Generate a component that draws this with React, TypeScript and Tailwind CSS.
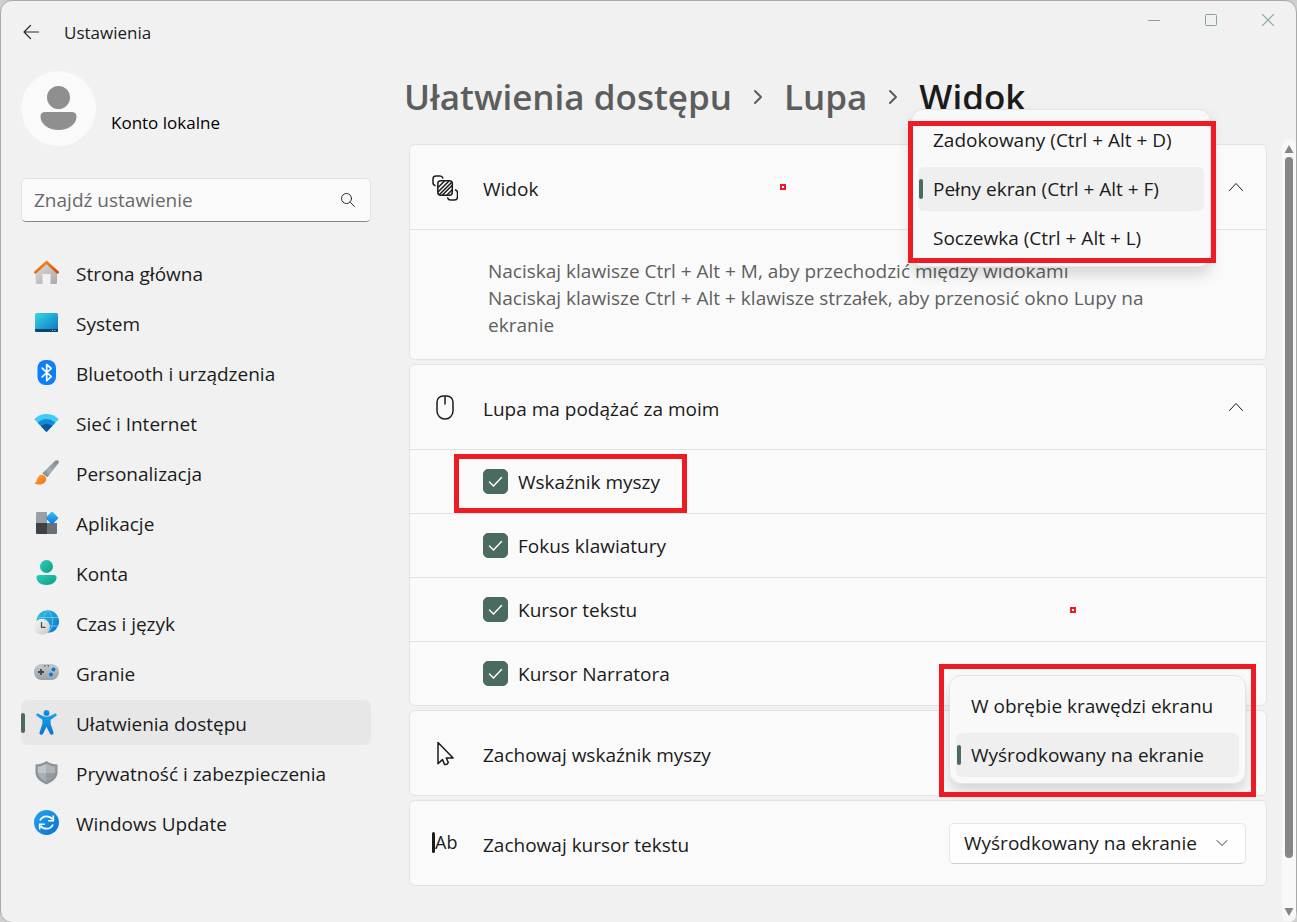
import { useState, type ReactNode } from 'react';

function HomeIcon() {
  return (
    <svg viewBox="0 0 25 25" className="size-[25px]">
      <defs>
        <linearGradient id="home-wall" x1="0" y1="0" x2="1" y2="1">
          <stop offset="0" stopColor="#dcdcdc" />
          <stop offset="1" stopColor="#a9a9a9" />
        </linearGradient>
        <linearGradient id="home-roof" x1="0" y1="0" x2="1" y2="1">
          <stop offset="0" stopColor="#f8931f" />
          <stop offset="1" stopColor="#d2480f" />
        </linearGradient>
      </defs>
      <path d="M12.500 4 23 13v9.500a1.500 1.500 0 0 1-1.500 1.500H16.500V14H8.500v10H3.200A1.500 1.500 0 0 1 1.700 22.500V13z" fill="url(#home-wall)" />
      <path d="M1.500 12.300 12.500 2.300l11 10" fill="none" stroke="url(#home-roof)" strokeWidth="2.800" strokeLinejoin="round" strokeLinecap="round" />
    </svg>
  );
}

function SystemIcon() {
  return (
    <svg viewBox="0 0 25 25" className="size-[25px]">
      <defs>
        <linearGradient id="sys" x1="0" y1="0" x2="1" y2="1">
          <stop offset="0" stopColor="#37d8e4" />
          <stop offset="1" stopColor="#0b72c4" />
        </linearGradient>
      </defs>
      <rect x="1" y="3" width="23" height="19" rx="1.500" fill="url(#sys)" />
      <path d="M1 19h23v1.500a1.500 1.500 0 0 1-1.500 1.500h-20A1.500 1.500 0 0 1 1 20.500z" fill="#0b4667" />
      <path d="M18 20.500h1M20.500 20.500h1" stroke="#9fd3ea" strokeWidth="1" />
    </svg>
  );
}

function BluetoothIcon() {
  return (
    <svg viewBox="0 0 25 25" className="size-[25px]">
      <rect x="3.500" y="0" width="18.500" height="25" rx="8" fill="#0f7efb" />
      <path d="m8.200 8.200 9 8.400-4.500 4V4.500l4.500 4-9 8.300" fill="none" stroke="#fff" strokeWidth="1.700" strokeLinejoin="round" strokeLinecap="round" />
    </svg>
  );
}

function WifiIcon() {
  return (
    <svg viewBox="0 0 25 25" className="size-[25px]">
      <path d="M.300 9.300C3.500 5.800 7.800 4 12.500 4s9 1.800 12.200 5.300L12.500 22z" fill="#3fccf6" />
      <path d="M3.700 12.800C6.200 10.300 9.200 9 12.500 9s6.300 1.300 8.800 3.800L12.500 22z" fill="#1689d6" />
      <path d="M7 16.300c1.600-1.600 3.500-2.500 5.500-2.500s3.900.9 5.500 2.500L12.500 22z" fill="#0f559c" />
    </svg>
  );
}

function BrushIcon() {
  return (
    <svg viewBox="0 0 25 25" className="size-[25px]">
      <defs>
        <linearGradient id="brush-handle" x1="1" y1="0" x2="0" y2="1">
          <stop offset="0" stopColor="#7c858b" />
          <stop offset=".6" stopColor="#a6afb5" />
          <stop offset="1" stopColor="#6b747a" />
        </linearGradient>
        <linearGradient id="brush-tip" x1="0" y1="0" x2="1" y2="1">
          <stop offset="0" stopColor="#fbae3c" />
          <stop offset="1" stopColor="#ee6d12" />
        </linearGradient>
      </defs>
      <path d="M23.900.600c1 .7 1.100 1.700.5 2.700L13.400 17.300 8.300 13.200 20.800 1.100c.9-.8 2.200-1.100 3.100-.5z" fill="url(#brush-handle)" />
      <path d="M4.200 16.800c1.700-2.400 4.700-2.600 6.600-.9 1.900 1.700 1.800 4.700-.2 6.700-2.500 2.500-7 2.500-10.300.9 2.600-1.200 2.200-4.300 3.900-6.700z" fill="url(#brush-tip)" />
    </svg>
  );
}

function AppsIcon() {
  return (
    <svg viewBox="0 0 25 25" className="size-[25px]">
      <defs>
        <linearGradient id="apps-tile" x1="0" y1="0" x2="1" y2="1">
          <stop offset="0" stopColor="#35c3fa" />
          <stop offset="1" stopColor="#0d73dc" />
        </linearGradient>
      </defs>
      <path d="M3 2h10v11H2V3a1 1 0 0 1 1-1z" fill="#98a0a5" />
      <path d="M2 13h11v11H3a1 1 0 0 1-1-1z" fill="#3e4246" />
      <path d="M13 13h10v10a1 1 0 0 1-1 1h-9z" fill="#697076" />
      <rect x="13.300" y="3.300" width="9.400" height="9.400" rx="1" transform="rotate(45 18 8)" fill="url(#apps-tile)" />
    </svg>
  );
}

function AccountIcon() {
  return (
    <svg viewBox="0 0 25 25" className="size-[25px]">
      <defs>
        <linearGradient id="account" x1="0" y1="0" x2="1" y2="1">
          <stop offset="0" stopColor="#2bd0b8" />
          <stop offset="1" stopColor="#0f9a83" />
        </linearGradient>
      </defs>
      <circle cx="12.500" cy="6.500" r="6.500" fill="url(#account)" />
      <path d="M5 15h15c1.500 0 2.500 1 2.500 2.500 0 4.500-4.300 7.500-10 7.500s-10-3-10-7.500C2.500 16 3.500 15 5 15z" fill="url(#account)" />
    </svg>
  );
}

function TimeIcon() {
  return (
    <svg viewBox="0 0 25 25" className="size-[25px]">
      <defs>
        <linearGradient id="globe" x1="0" y1="0" x2="1" y2="1">
          <stop offset="0" stopColor="#35bfe2" />
          <stop offset="1" stopColor="#0e6fcb" />
        </linearGradient>
        <linearGradient id="clock" x1="0" y1="0" x2="1" y2="1">
          <stop offset="0" stopColor="#fafafa" />
          <stop offset="1" stopColor="#c4c6c9" />
        </linearGradient>
      </defs>
      <circle cx="13.800" cy="11.500" r="11.300" fill="url(#globe)" />
      <path d="M4 7.500h20M4 16h20M13.800.200c-6.500 6-6.500 16.500 0 22.600M13.800.200c6.500 6 6.500 16.500 0 22.600" fill="none" stroke="#4fd0ee" strokeWidth="1" />
      <circle cx="8" cy="16.800" r="8" fill="url(#clock)" />
      <path d="M7.500 12v5.300h4" fill="none" stroke="#4b4f54" strokeWidth="1.300" />
    </svg>
  );
}

function GamepadIcon() {
  return (
    <svg viewBox="0 0 25 25" className="size-[25px]">
      <defs>
        <linearGradient id="pad" x1="0" y1="0" x2="0" y2="1">
          <stop offset="0" stopColor="#c5cacd" />
          <stop offset="1" stopColor="#9ba3a8" />
        </linearGradient>
      </defs>
      <rect x="0" y="4" width="25" height="16" rx="7.500" fill="url(#pad)" />
      <path d="M7 9v6M4 12h6" stroke="#43484c" strokeWidth="1.800" />
      <path d="M10 5.800h1.500M13.500 5.800H15" stroke="#50565a" strokeWidth="1.200" />
      <circle cx="19.500" cy="9.500" r="2" fill="#0f77d3" />
      <circle cx="17" cy="14.500" r="2" fill="#0f77d3" />
    </svg>
  );
}

function AccessibilityIcon() {
  return (
    <svg viewBox="0 0 25 25" className="size-[25px]">
      <defs>
        <linearGradient id="person" x1="0" y1="0" x2="0" y2="1">
          <stop offset="0" stopColor="#18a1e8" />
          <stop offset="1" stopColor="#0a74d2" />
        </linearGradient>
      </defs>
      <circle cx="12.500" cy="2.900" r="2.900" fill="url(#person)" />
      <path d="M3.900 3.600c1.400.6 4.800 3.200 8.600 3.200s7.200-2.600 8.600-3.200c1.300-.4 2.300 1.500 1 2.500l-5.500 3.600v4.100l2.900 8.600c.6 2-2.500 3.500-3.500 1.400l-3.500-7-3.500 7c-1 2.100-4.100.6-3.500-1.400l2.900-8.600V9.700L2.900 6.100c-1.300-1-.3-2.900 1-2.500z" fill="url(#person)" />
    </svg>
  );
}

function ShieldIcon() {
  return (
    <svg viewBox="0 0 25 25" className="size-[25px]">
      <path d="M12.500 1c3 2.300 6.500 3.400 11 3.500V12c0 5.800-4 9.500-11 12.500C5.500 21.500 1.500 17.800 1.500 12V4.500C6 4.400 9.500 3.300 12.500 1z" fill="#8b9398" />
      <path d="M12.500 3.500c-2.500 1.700-5.300 2.700-8.700 3V12c0 .3 0 .7.100 1h8.600z" fill="#c1c5c8" />
      <path d="M12.500 3.500c2.500 1.700 5.300 2.700 8.700 3V12c0 .3 0 .7-.1 1h-8.600z" fill="#aeb4b8" />
      <path d="M3.900 13c.5 3.700 3.400 6.500 8.600 8.900V13z" fill="#a9afb3" />
      <path d="M21.100 13c-.5 3.700-3.400 6.500-8.600 8.900V13z" fill="#959ca1" />
    </svg>
  );
}

function UpdateIcon() {
  return (
    <svg viewBox="0 0 25 25" className="size-[25px]">
      <defs>
        <linearGradient id="update" x1="0" y1="0" x2="1" y2="1">
          <stop offset="0" stopColor="#22a6ea" />
          <stop offset="1" stopColor="#0b6fd3" />
        </linearGradient>
      </defs>
      <circle cx="12.500" cy="12.500" r="12.500" fill="url(#update)" />
      <path d="M6 10.500c1.200-2.700 3.600-4.200 6.500-4.200 2.500 0 4.600 1 6 3M19 14.500c-1.200 2.700-3.600 4.200-6.500 4.200-2.500 0-4.600-1-6-3" fill="none" stroke="#fff" strokeWidth="1.800" />
      <path d="M19.300 5.500v5.200h-5.200M5.700 19.500v-5.200h5.200" fill="none" stroke="#fff" strokeWidth="1.600" />
    </svg>
  );
}

function ViewIcon() {
  return (
    <svg viewBox="0 0 26 26" className="size-[26px]" fill="none" stroke="#1b1b1b" strokeWidth="1.500" strokeLinecap="round">
      <path d="M3 10.500C1.600 10.200 1 9.200 1 7.800V4c0-2 1-3 3-3h4c1.400 0 2.400.6 2.800 2M23.500 15c1.200.4 2 1.400 2 2.800V22c0 2-1 3-3 3h-4c-1.400 0-2.400-.6-2.800-2" />
      <rect x="5.800" y="5.800" width="14.500" height="14.500" rx="3" />
      <path d="M6.500 12l5.500-5.500M6.500 16.500l10-10M7.500 19.500 19.500 7.500M10.500 20l9.500-9.500M15 20l5-5" />
    </svg>
  );
}

function MouseIcon() {
  return (
    <svg viewBox="0 0 26 26" className="size-[26px]" fill="none" stroke="#1b1b1b" strokeWidth="1.500" strokeLinecap="round">
      <path d="M5 7a6 6 0 0 1 6-6h4a6 6 0 0 1 6 6v9a8 8 0 0 1-16 0zM13 1v8" />
    </svg>
  );
}

function PointerIcon() {
  return (
    <svg viewBox="0 0 26 26" className="size-[26px]" fill="none" stroke="#1b1b1b" strokeWidth="1.500" strokeLinejoin="round">
      <path d="M6 1.500v21.300l4.400-4.200 2.300 5 2.200-.4 1.400-1.700-2-4.500h6.800z" />
    </svg>
  );
}

function CursorIcon() {
  return (
    <span aria-hidden="true" className="flex items-center pb-1">
      <span className="h-[21px] w-[3px] rounded-sm bg-[#1b1b1b]" />
      <span className="text-[18px] leading-none">Ab</span>
    </span>
  );
}

function Chevron({ d, className }: { d: string; className: string }) {
  return (
    <svg viewBox="0 0 16 16" className={className} fill="none" stroke="currentColor" strokeLinecap="round" strokeLinejoin="round">
      <path d={d} />
    </svg>
  );
}

const navItems = [
  { label: 'Strona główna', icon: <HomeIcon /> },
  { label: 'System', icon: <SystemIcon /> },
  { label: 'Bluetooth i urządzenia', icon: <BluetoothIcon /> },
  { label: 'Sieć i Internet', icon: <WifiIcon /> },
  { label: 'Personalizacja', icon: <BrushIcon /> },
  { label: 'Aplikacje', icon: <AppsIcon /> },
  { label: 'Konta', icon: <AccountIcon /> },
  { label: 'Czas i język', icon: <TimeIcon /> },
  { label: 'Granie', icon: <GamepadIcon /> },
  { label: 'Ułatwienia dostępu', icon: <AccessibilityIcon />, active: true },
  { label: 'Prywatność i zabezpieczenia', icon: <ShieldIcon /> },
  { label: 'Windows Update', icon: <UpdateIcon /> },
];

const followItems = ['Wskaźnik myszy', 'Fokus klawiatury', 'Kursor tekstu', 'Kursor Narratora'];

function Card({ children }: { children: ReactNode }) {
  return <section className="rounded-md border border-[#e3e3e3] bg-[#fafafa]">{children}</section>;
}

function CardRow({ icon, title, children }: { icon: ReactNode; title: string; children?: ReactNode }) {
  return (
    <div className="flex h-[84px] items-center pl-[22px]">
      <div className="flex w-[51px] shrink-0 items-center pt-[2px]">{icon}</div>
      <h2 className="mt-1 flex-1">{title}</h2>
      {children}
    </div>
  );
}

function Menu({ label, options, selected, onSelect }: { label: string; options: string[]; selected: number; onSelect: (i: number) => void }) {
  return (
    <div
      role="listbox"
      aria-label={label}
      className="flex flex-col gap-[5px] rounded-xl border border-[#e4e4e4] bg-[#f9f9f9] px-[6px] pt-2 pb-[6px] shadow-[0_8px_14px_rgba(0,0,0,0.14)]"
    >
      {options.map((option, i) => (
        <button
          key={option}
          type="button"
          role="option"
          aria-selected={i === selected}
          onClick={() => onSelect(i)}
          className={`flex h-11 items-center rounded-md text-left whitespace-nowrap ${i === selected ? 'bg-[#efefef]' : ''}`}
        >
          <span className={`ml-px h-5 w-1 rounded-full ${i === selected ? 'bg-[#496b60]' : ''}`} />
          <span className="ml-[10px]">{option}</span>
        </button>
      ))}
    </div>
  );
}

export default function App() {
  const [view, setView] = useState(1);
  const [pointer, setPointer] = useState(1);

  return (
    <div className="flex min-h-screen bg-[#cfcfcf] font-['Open_Sans','Noto_Sans',sans-serif] text-[19px] leading-[27px] text-[#1b1b1b]">
      <div className="flex min-w-0 flex-1 flex-col rounded-xl border border-[#a9a9a9] bg-[#f1f1f1]">
        <header className="flex h-[70px] items-start justify-between">
          <div className="flex h-[62px] items-center pl-[21px]">
            <button type="button" aria-label="Wstecz" className="mr-[24px]">
              <svg viewBox="0 0 18 18" className="size-[18px]" fill="none" stroke="#2b2b2b" strokeWidth="1.200" strokeLinecap="round" strokeLinejoin="round">
                <path d="M16.500 9H2M8.500 2.500 2 9l6.500 6.500" />
              </svg>
            </button>
            <span className="text-[17px]">Ustawienia</span>
          </div>
          <div className="flex text-[#86a39b]">
            <button type="button" aria-label="Minimalizuj" className="flex h-[38px] w-[57px] items-center justify-center">
              <svg viewBox="0 0 12 12" className="size-3" fill="none" stroke="currentColor"><path d="M0 6.500h12" /></svg>
            </button>
            <button type="button" aria-label="Maksymalizuj" className="flex h-[38px] w-[57px] items-center justify-center">
              <svg viewBox="0 0 12 12" className="size-3" fill="none" stroke="currentColor"><rect x=".5" y=".5" width="11" height="11" rx="1" /></svg>
            </button>
            <button type="button" aria-label="Zamknij" className="flex h-[38px] w-[57px] items-center justify-center">
              <svg viewBox="0 0 12 12" className="size-3" fill="none" stroke="currentColor" strokeWidth="1.200"><path d="M0 0l12 12M12 0 0 12" /></svg>
            </button>
          </div>
        </header>

        <div className="flex flex-1">
          <aside className="ml-5 w-[350px] shrink-0">
            <div className="flex h-[75px] items-end">
              <svg viewBox="0 0 75 75" className="size-[75px]">
                <circle cx="37.500" cy="37.500" r="37.500" fill="#fafafa" />
                <circle cx="37.500" cy="26.500" r="11.500" fill="#8f8f8f" />
                <path d="M24 41h27c2.800 0 4.500 1.500 4.500 4.500C55.500 53 48 59 37.500 59s-18-6-18-13.500c0-3 1.700-4.500 4.500-4.500z" fill="#8f8f8f" />
              </svg>
              <span className="mb-[10px] ml-[15px] text-[17px] text-black">Konto lokalne</span>
            </div>

            <div className="mt-8 flex h-11 items-center rounded-[5px] border border-b-[#868686] border-[#e3e3e3] bg-[#fafafa] px-3">
              <input
                type="search"
                aria-label="Znajdź ustawienie"
                placeholder="Znajdź ustawienie"
                className="min-w-0 flex-1 bg-transparent outline-none placeholder:text-[#686868]"
              />
              <svg viewBox="0 0 16 16" className="mr-[2px] size-4" fill="none" stroke="#2b2b2b" strokeLinecap="round">
                <circle cx="6.500" cy="6.500" r="5" />
                <path d="m10.500 10.500 4 4" />
              </svg>
            </div>

            <nav className="mt-7 flex flex-col gap-[5px]">
              {navItems.map((item) => (
                <a
                  key={item.label}
                  href="#"
                  className={`flex h-[45px] items-center rounded-md ${item.active ? 'bg-[#e7e7e7]' : ''}`}
                >
                  <span className={`h-5 w-1 rounded-full ${item.active ? 'bg-[#496b60]' : ''}`} />
                  <span className="ml-[9px]">{item.icon}</span>
                  <span className="mt-1 ml-[17px]">{item.label}</span>
                </a>
              ))}
            </nav>
          </aside>

          <main className="ml-[33px] flex min-w-0 flex-1 flex-col">
            <h1 className="flex h-[52px] items-center text-[35px] leading-[50px] font-semibold whitespace-nowrap">
              <a href="#" className="text-[#5d5d5d]">Ułatwienia dostępu</a>
              <Chevron d="m5 2 6 6-6 6" className="mx-[18px] size-4 stroke-2 text-[#5d5d5d]" />
              <a href="#" className="text-[#5d5d5d]">Lupa</a>
              <Chevron d="m5 2 6 6-6 6" className="mx-[18px] size-4 stroke-2 text-[#5d5d5d]" />
              <span>Widok</span>
            </h1>

            <div className="mt-4 flex flex-1">
              <div className="mt-[5px] mb-9 ml-[5px] flex min-w-0 flex-1 flex-col gap-1">
                <Card>
                  <CardRow icon={<ViewIcon />} title="Widok">
                    <span className="mr-[122px] size-[6px] border-2 border-[#ed1c24]" />
                    <div className="relative h-[84px] w-[308px]">
                      <div className="absolute -top-9 left-[3px] w-[300px]">
                        <Menu
                          label="Widok"
                          options={['Zadokowany (Ctrl + Alt + D)', 'Pełny ekran (Ctrl + Alt + F)', 'Soczewka (Ctrl + Alt + L)']}
                          selected={view}
                          onSelect={setView}
                        />
                      </div>
                      <div className="pointer-events-none absolute -top-6 left-0 h-[142px] w-[308px] border-5 border-[#ed1c24]" />
                    </div>
                    <button type="button" aria-label="Zwiń: Widok" className="mr-[22px] ml-3">
                      <Chevron d="m1.500 11.500 6.500-7 6.500 7" className="size-4" />
                    </button>
                  </CardRow>
                  <div className="border-t border-[#e3e3e3] pt-7 pr-[100px] pb-5 pl-[78px] text-[#5f5f5f]">
                    <p>Naciskaj klawisze Ctrl + Alt + M, aby przechodzić między widokami</p>
                    <p>Naciskaj klawisze Ctrl + Alt + klawisze strzałek, aby przenosić okno Lupy na ekranie</p>
                  </div>
                </Card>

                <Card>
                  <CardRow icon={<MouseIcon />} title="Lupa ma podążać za moim">
                    <button type="button" aria-label="Zwiń: Lupa ma podążać za moim" className="mr-[22px]">
                      <Chevron d="m1.500 11.500 6.500-7 6.500 7" className="size-4" />
                    </button>
                  </CardRow>
                  {followItems.map((item, i) => (
                    <div key={item} className="relative flex h-16 items-center justify-between border-t border-[#e3e3e3] pr-[190px] pl-[73px]">
                      <label className="flex items-center gap-[10px]">
                        <span className="relative flex">
                          <input type="checkbox" defaultChecked className="peer size-[25px] appearance-none rounded-[5px] border border-[#8a8a8a] checked:border-[#496b60] checked:bg-[#496b60]" />
                          <svg viewBox="0 0 25 25" className="pointer-events-none absolute inset-0 hidden size-[25px] peer-checked:block" fill="none" stroke="#fff" strokeWidth="1.400" strokeLinecap="round" strokeLinejoin="round">
                            <path d="m6.500 13 4 4 8-8.500" />
                          </svg>
                        </span>
                        <span className="mt-px">{item}</span>
                      </label>
                      {i === 0 && (
                        <span className="pointer-events-none absolute top-1 left-11 h-[59px] w-[233px] border-5 border-[#ed1c24]" />
                      )}
                      {i === 2 && <span className="size-[6px] border-2 border-[#ed1c24]" />}
                    </div>
                  ))}
                </Card>

                <Card>
                  <CardRow icon={<PointerIcon />} title="Zachowaj wskaźnik myszy">
                    <div className="relative mr-[10px] h-[84px] w-[317px]">
                      <div className="absolute -top-9 left-[10px] w-[297px]">
                        <Menu
                          label="Zachowaj wskaźnik myszy"
                          options={['W obrębie krawędzi ekranu', 'Wyśrodkowany na ekranie']}
                          selected={pointer}
                          onSelect={setPointer}
                        />
                      </div>
                      <div className="pointer-events-none absolute -top-[47px] left-0 h-[133px] w-[317px] border-5 border-[#ed1c24]" />
                    </div>
                  </CardRow>
                </Card>

                <Card>
                  <CardRow icon={<CursorIcon />} title="Zachowaj kursor tekstu">
                    <div className="relative mr-5 w-[297px]">
                      <select
                        aria-label="Zachowaj kursor tekstu"
                        className="h-[41px] w-full appearance-none rounded-[5px] border border-b-[#cfcfcf] border-[#e6e6e6] bg-[#fefefe] pl-[14px]"
                      >
                        <option>Wyśrodkowany na ekranie</option>
                        <option>W obrębie krawędzi ekranu</option>
                      </select>
                      <Chevron d="m3 5.500 5 5 5-5" className="pointer-events-none absolute top-3 right-4 size-4 text-[#3d3d3d]" />
                    </div>
                  </CardRow>
                </Card>
              </div>

              <div aria-hidden="true" className="ml-[15px] flex w-[14px] flex-col items-center rounded-full bg-[#f8f8f8] pt-[6px] pb-[6px]">
                <svg viewBox="0 0 10 8" className="h-2 w-[10px]"><path d="M5 0l4.500 8h-9z" fill="#868686" /></svg>
                <div className="mt-1 w-2 flex-[14] rounded-full bg-[#868686]" />
                <div className="flex-1" />
                <svg viewBox="0 0 10 8" className="h-2 w-[10px]"><path d="M5 8l4.500-8h-9z" fill="#868686" /></svg>
              </div>
            </div>
          </main>
        </div>
      </div>
    </div>
  );
}
